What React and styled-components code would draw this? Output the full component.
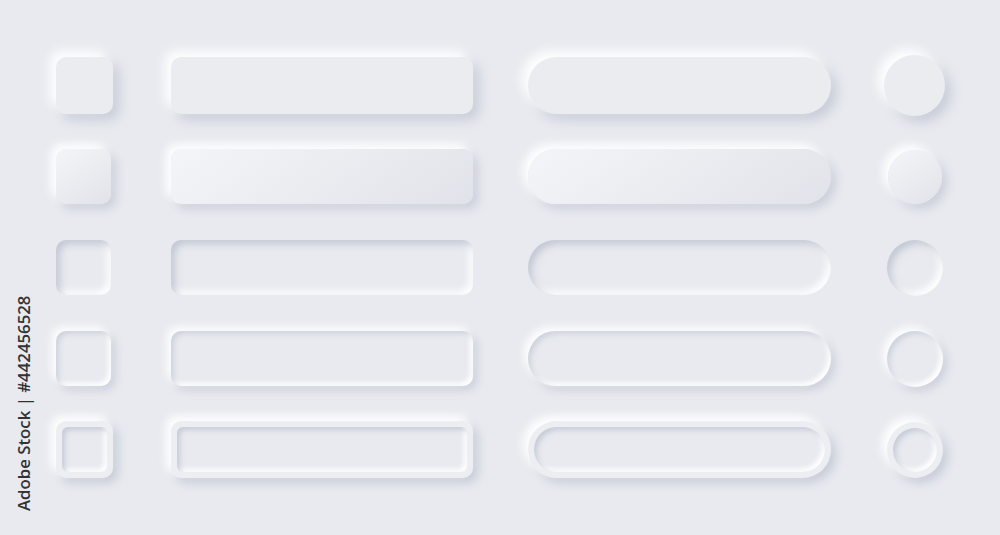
import { Fragment } from 'react';
import styled, { createGlobalStyle, css } from 'styled-components';

const bg = '#e8eaef';
const light = '#ffffff';

const Global = createGlobalStyle`
    body {
        margin: 0;
        background: ${bg};
        font-family: 'Open Sans', 'Liberation Sans', sans-serif;
    }
`

const Page = styled.div`
    position: relative;
    width: 1000px;
    height: 535px;
    overflow: hidden;
    background: ${bg};
    box-sizing: border-box;
    padding: 57px 0 0 56px;
`

const Board = styled.div`
    display: grid;
    grid-template-columns: 115px 357px 356px 61px;
    grid-auto-rows: 57px;
    row-gap: 34px;
    align-items: center;
`

const variants = {
    raised: css`
        background: #eaecf0;
        box-shadow: -6px -6px 12px ${light}, 6px 6px 12px rgba(160, 168, 188, 0.45);
    `,
    convex: css`
        background: linear-gradient(145deg, #f4f5f8, #e0e3e9);
        box-shadow: -5px -5px 10px ${light}, 5px 5px 10px rgba(160, 168, 188, 0.4);
    `,
    inset: css`
        background: ${bg};
        box-shadow: inset 4px 4px 7px rgba(160, 168, 188, 0.5), inset -4px -4px 7px ${light};
    `,
    rim: css`
        background: ${bg};
        box-shadow: -4px -4px 8px ${light}, 4px 4px 8px rgba(160, 168, 188, 0.4),
            inset 3px 3px 5px rgba(160, 168, 188, 0.35), inset -3px -3px 5px ${light};
    `,
    frame: css`
        background: #eceef2;
        box-shadow: -5px -5px 10px ${light}, 5px 5px 10px rgba(160, 168, 188, 0.45);
        &::after {
            content: '';
            position: absolute;
            inset: 6px;
            border-radius: ${({ $inner }) => $inner};
            background: ${bg};
            box-shadow: inset 3px 3px 5px rgba(160, 168, 188, 0.45), inset -3px -3px 5px ${light};
        }
    `,
}

const Shape = styled.div`
    position: relative;
    width: ${({ $w }) => $w}px;
    height: ${({ $h }) => $h}px;
    border-radius: ${({ $r }) => $r};
    justify-self: ${({ $center }) => $center ? 'center' : 'start'};
    ${({ $variant }) => variants[$variant]}
`

const Credit = styled.div`
    position: absolute;
    left: 12px;
    top: 511px;
    transform-origin: 0 0;
    transform: rotate(-90deg);
    white-space: nowrap;
    font-size: 16.8px;
    font-weight: 600;
    color: #333333;
`

const rows = [
    { variant: 'raised', sq: 57, circle: 61 },
    { variant: 'convex', sq: 55, circle: 54 },
    { variant: 'inset', sq: 55, circle: 56 },
    { variant: 'rim', sq: 55, circle: 56 },
    { variant: 'frame', sq: 57, circle: 56 },
]

export default function App() {
    return (
        <Page>
            <Global />
            <Board>
                {rows.map(({ variant, sq, circle }) => (
                    <Fragment key={variant}>
                        <Shape $variant={variant} $w={sq} $h={sq} $r="10px" $inner="6px" />
                        <Shape $variant={variant} $w={302} $h={sq} $r="10px" $inner="6px" />
                        <Shape $variant={variant} $w={303} $h={sq} $r="999px" $inner="999px" />
                        <Shape $variant={variant} $w={circle} $h={circle} $r="50%" $inner="50%" $center />
                    </Fragment>
                ))}
            </Board>
            <Credit>Adobe Stock | #442456528</Credit>
        </Page>
    )
}
